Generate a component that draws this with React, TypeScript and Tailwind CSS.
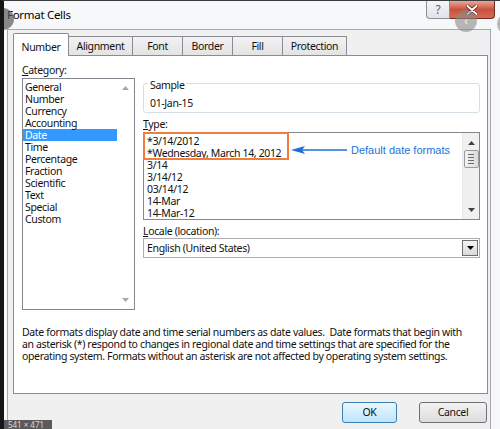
import React from 'react'

const tabs = [
  { label: 'Number', w: 'w-[56px]', active: true },
  { label: 'Alignment', w: 'w-[64px]' },
  { label: 'Font', w: 'w-[50px]' },
  { label: 'Border', w: 'w-[50px]' },
  { label: 'Fill', w: 'w-[50px]' },
  { label: 'Protection', w: 'w-[64px]' },
]

const categories = [
  'General',
  'Number',
  'Currency',
  'Accounting',
  'Date',
  'Time',
  'Percentage',
  'Fraction',
  'Scientific',
  'Text',
  'Special',
  'Custom',
]

const types = [
  '*3/14/2012',
  '*Wednesday, March 14, 2012',
  '3/14',
  '3/14/12',
  '03/14/12',
  '14-Mar',
  '14-Mar-12',
]

function Arrow({ up, dark }: { up?: boolean; dark?: boolean }) {
  return (
    <svg width="7" height="4" viewBox="0 0 7 4" className="block">
      <path
        d={up ? 'M0 4 L3.5 0 L7 4 Z' : 'M0 0 L3.5 4 L7 0 Z'}
        fill={dark ? '#404040' : '#a8a8a8'}
      />
    </svg>
  )
}

function TitleButtons() {
  return (
    <div className="mr-[5px] flex h-[18px] shrink-0">
      <div className="flex w-[24px] items-center justify-center rounded-bl-[4px] border border-t-0 border-[#8a8f98] bg-gradient-to-b from-[#f4f6f8] to-[#dfe3e8] text-[12px] leading-none text-[#5b6068]">
        ?
      </div>
      <div className="flex w-[45px] items-center justify-center rounded-br-[4px] border border-l-0 border-t-0 border-[#6d2a22] bg-gradient-to-b from-[#e9a698] via-[#c9503c] to-[#d86a55]">
        <svg width="12" height="10" viewBox="0 0 12 10">
          <path d="M1.5 1 L10.5 9 M10.5 1 L1.5 9" stroke="#4a1a14" strokeWidth="3.4" strokeLinecap="round" />
          <path d="M1.5 1 L10.5 9 M10.5 1 L1.5 9" stroke="#ffffff" strokeWidth="2" strokeLinecap="round" />
        </svg>
      </div>
    </div>
  )
}

export default function App() {
  return (
    <div className="relative flex h-[429px] w-[500px] overflow-hidden border-l-[4px] border-t border-l-[#161616] border-t-[#3c3c3c] bg-[#f7f8f9] font-['Noto_Sans',sans-serif] text-[10.5px] leading-[12px] tracking-[-0.35px] text-[#111]">
      <div className="flex min-w-0 flex-1 flex-col">
        {/* title bar */}
        <div className="flex h-[28px] items-start justify-between">
          <div className="mt-[7px] pl-[3px] text-[11.5px] leading-[14px] tracking-[-0.3px] text-black">Format Cells</div>
          <TitleButtons />
        </div>

        {/* client area */}
        <div className="ml-[3px] mr-[9px] flex min-w-0 flex-1 flex-col border border-b-0 border-[#a4a9b0] bg-[#f0f0f0] pl-[5px] pr-[2px] pt-[3px]">
          {/* tabs */}
          <div className="flex items-end">
            {tabs.map((t) =>
              t.active ? (
                <div
                  key={t.label}
                  className={`${t.w} relative z-10 -mb-px flex h-[23px] items-start justify-center rounded-t-[2px] border border-b-0 border-[#898c95] bg-white pt-[7px]`}
                >
                  {t.label}
                </div>
              ) : (
                <div
                  key={t.label}
                  className={`${t.w} flex h-[19px] items-center justify-center border-r border-t border-[#898c95] bg-gradient-to-b from-[#f2f2f2] to-[#e3e3e3]`}
                >
                  {t.label}
                </div>
              ),
            )}
          </div>

          {/* panel */}
          <div className="flex h-[339px] flex-col overflow-hidden border border-[#898c95] bg-white pl-[8px] pr-[7px] pt-[8px]">
            <div className="flex gap-[8px]">
              {/* category */}
              <div className="flex w-[113px] flex-col">
                <div>
                  <span className="underline">C</span>ategory:
                </div>
                <div className="mt-[2px] flex h-[232px] border border-[#828790]">
                  <div className="flex-1 pt-[2px]">
                    {categories.map((c) => (
                      <div
                        key={c}
                        className={`h-[12px] pl-[2px] ${c === 'Date' ? 'bg-[#3399ff] text-white' : ''}`}
                      >
                        {c}
                      </div>
                    ))}
                  </div>
                  <div className="flex w-[17px] flex-col items-center justify-between py-[7px]">
                    <Arrow up />
                    <Arrow />
                  </div>
                </div>
              </div>

              {/* right side */}
              <div className="flex w-[337px] flex-col">
                <div className="relative mt-[19px] h-[30px] rounded-[3px] border border-[#d5dfe5] pl-[6px] pt-[13px]">
                  <span className="absolute left-[4px] top-[-5px] bg-white px-[2px]">Sample</span>
                  01-Jan-15
                </div>

                <div className="mt-[5px]">
                  <span className="underline">T</span>ype:
                </div>
                <div className="relative mt-[2px] flex h-[88px] border border-[#828790]">
                  <div className="flex-1 pl-[3px] pt-[2px]">
                    {types.map((t) => (
                      <div key={t} className="h-[12px] whitespace-nowrap">
                        {t}
                      </div>
                    ))}
                  </div>
                  <div className="flex w-[17px] flex-col items-center border-l border-[#e8e8e8] bg-[#f0f0f0] pt-[8px]">
                    <Arrow up dark />
                    <div className="mt-[5px] flex h-[18px] w-[15px] flex-col items-center justify-center gap-[2px] rounded-[2px] border border-[#9a9a9a] bg-gradient-to-r from-[#f3f3f3] to-[#dcdcdc]">
                      <div className="h-px w-[6px] bg-[#6b6b6b]" />
                      <div className="h-px w-[6px] bg-[#6b6b6b]" />
                      <div className="h-px w-[6px] bg-[#6b6b6b]" />
                      <div className="h-px w-[6px] bg-[#6b6b6b]" />
                    </div>
                    <div className="flex-1" />
                    <div className="pb-[7px]">
                      <Arrow dark />
                    </div>
                  </div>

                  {/* annotation */}
                  <div className="absolute left-[-1px] top-[-1px] h-[28px] w-[146px] border-2 border-[#ef7d3b]" />
                  <div className="absolute left-[147px] top-[11px] flex items-center">
                    <svg width="56" height="10" viewBox="0 0 56 10" className="block">
                      <path d="M0 5 L14 1 L11 5 L14 9 Z" fill="#1f6fd6" />
                      <path d="M11 5 L56 5" stroke="#1f6fd6" strokeWidth="1.6" />
                    </svg>
                    <span className="ml-[4px] font-['Liberation_Sans',sans-serif] text-[11px] tracking-normal text-[#2173d9]">
                      Default date formats
                    </span>
                  </div>
                </div>

                <div className="mt-[5px]">
                  <span className="underline">L</span>ocale (location):
                </div>
                <div className="mt-[1px] flex h-[20px] items-center border border-[#abadb3] pl-[3px] pr-px">
                  <span className="flex-1">English (United States)</span>
                  <div className="flex h-[16px] w-[16px] items-center justify-center border border-[#707070] bg-gradient-to-b from-[#f4f4f4] to-[#dadada]">
                    <svg width="7" height="4" viewBox="0 0 7 4">
                      <path d="M0 0 L3.5 4 L7 0 Z" fill="#000" />
                    </svg>
                  </div>
                </div>
              </div>
            </div>

            <div className="mt-[16px] whitespace-pre">
              <div>Date formats display date and time serial numbers as date values.  Date formats that begin with</div>
              <div>an asterisk (*) respond to changes in regional date and time settings that are specified for the</div>
              <div>operating system. Formats without an asterisk are not affected by operating system settings.</div>
            </div>
          </div>

          {/* buttons */}
          <div className="mr-px mt-[8px] flex justify-end gap-[22px]">
            <button
              type="button"
              className="h-[21px] w-[55px] rounded-[3px] border border-[#3c7fb1] bg-gradient-to-b from-[#eaf6fd] to-[#bee6fd] leading-none"
            >
              OK
            </button>
            <button
              type="button"
              className="h-[21px] w-[68px] rounded-[3px] border border-[#707070] bg-gradient-to-b from-[#f2f2f2] to-[#dddddd] leading-none"
            >
              Cancel
            </button>
          </div>
        </div>
      </div>

      {/* image viewer overlays */}
      <div className="absolute left-[-12px] top-[7px] h-[22px] w-[22px] rounded-full bg-[#5a5a5a]/70" />
      <div className="absolute left-[451px] top-[9px] flex h-[22px] w-[22px] items-center justify-center rounded-full bg-[#8a8a8a]/60 text-[12px] text-white/80">
        ‹
      </div>
      <div className="absolute left-[493px] top-[12px] h-[22px] w-[22px] rounded-full bg-[#8a8a8a]/60" />
      <div className="absolute bottom-0 left-[-4px] flex h-[9px] w-[52px] items-center justify-center bg-[#5b5b5b] text-[8px] leading-none tracking-normal text-[#d8d8d8]">
        541 × 471
      </div>
    </div>
  )
}
